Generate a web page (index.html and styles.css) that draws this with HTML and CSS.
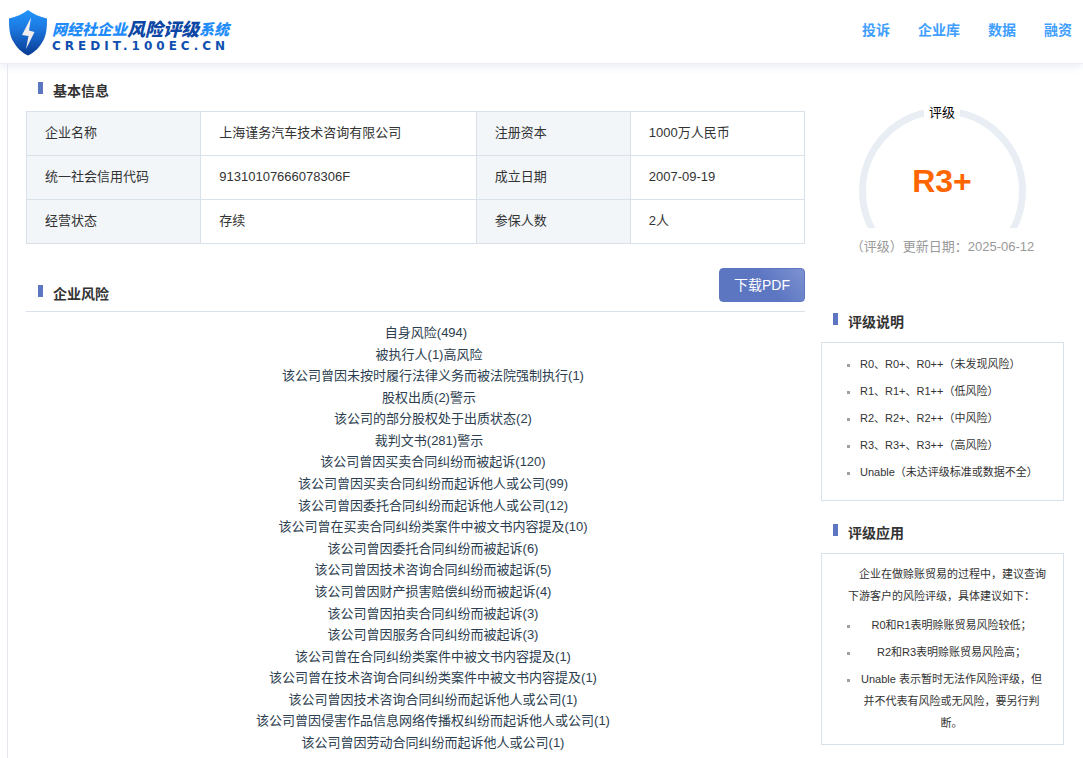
FILE: index.html
```html
<!DOCTYPE html>
<html lang="zh-CN">
<head>
    <meta charset="UTF-8">
    <meta name="viewport" content="width=device-width, initial-scale=1.0">
    <title>网经社企业风险评级系统</title>
    <link rel="stylesheet" href="styles.css">
</head>
<body>
    <header class="header">
        <a class="logo" href="#">
            <svg class="logo-shield" width="40" height="46" viewBox="0 0 40 46" aria-hidden="true">
                <defs>
                    <linearGradient id="shield" x1="0" y1="0" x2="0" y2="1">
                        <stop offset="0" stop-color="#2196fb"/>
                        <stop offset="0.4" stop-color="#1c78e0"/>
                        <stop offset="1" stop-color="#083b92"/>
                    </linearGradient>
                </defs>
                <path d="M20 0C15 4 8 7 1 8.500C1 18 1.500 25 5 31C8.500 37.500 13 42 20 45.500C27 42 31.500 37.500 35 31C38.500 25 39 18 39 8.500C32 7 25 4 20 0Z" fill="url(#shield)"/>
                <path d="M23 7.500L14 25L20.500 26L18 39L26.500 22L21 20.500Z" fill="#f3eeee"/>
            </svg>
            <span class="logo-text">
                <span class="logo-name"><span>网经社企业</span><strong>风险评级</strong><span>系统</span></span>
                <span class="logo-domain">CREDIT.100EC.CN</span>
            </span>
        </a>
        <nav class="nav">
            <a href="#">投诉</a>
            <a href="#">企业库</a>
            <a href="#">数据</a>
            <a href="#">融资</a>
        </nav>
    </header>

    <div class="content">
        <main class="main">
            <h2 class="title">基本信息</h2>
            <table class="info">
                <tr>
                    <th scope="row">企业名称</th>
                    <td class="wide">上海谨务汽车技术咨询有限公司</td>
                    <th scope="row" class="narrow">注册资本</th>
                    <td>1000万人民币</td>
                </tr>
                <tr>
                    <th scope="row">统一社会信用代码</th>
                    <td>91310107666078306F</td>
                    <th scope="row">成立日期</th>
                    <td>2007-09-19</td>
                </tr>
                <tr>
                    <th scope="row">经营状态</th>
                    <td>存续</td>
                    <th scope="row">参保人数</th>
                    <td>2人</td>
                </tr>
            </table>

            <div class="risk-head">
                <h2 class="title">企业风险</h2>
                <button class="download" type="button">下载PDF</button>
            </div>
            <ul class="risk-list">
                <li class="total">自身风险(494)</li>
                <li class="group">被执行人(1)高风险</li>
                <li>该公司曾因未按时履行法律义务而被法院强制执行(1)</li>
                <li class="group">股权出质(2)警示</li>
                <li>该公司的部分股权处于出质状态(2)</li>
                <li class="group">裁判文书(281)警示</li>
                <li>该公司曾因买卖合同纠纷而被起诉(120)</li>
                <li>该公司曾因买卖合同纠纷而起诉他人或公司(99)</li>
                <li>该公司曾因委托合同纠纷而起诉他人或公司(12)</li>
                <li>该公司曾在买卖合同纠纷类案件中被文书内容提及(10)</li>
                <li>该公司曾因委托合同纠纷而被起诉(6)</li>
                <li>该公司曾因技术咨询合同纠纷而被起诉(5)</li>
                <li>该公司曾因财产损害赔偿纠纷而被起诉(4)</li>
                <li>该公司曾因拍卖合同纠纷而被起诉(3)</li>
                <li>该公司曾因服务合同纠纷而被起诉(3)</li>
                <li>该公司曾在合同纠纷类案件中被文书内容提及(1)</li>
                <li>该公司曾在技术咨询合同纠纷类案件中被文书内容提及(1)</li>
                <li>该公司曾因技术咨询合同纠纷而起诉他人或公司(1)</li>
                <li>该公司曾因侵害作品信息网络传播权纠纷而起诉他人或公司(1)</li>
                <li>该公司曾因劳动合同纠纷而起诉他人或公司(1)</li>
            </ul>
        </main>

        <aside class="sidebar">
            <div class="rating">
                <svg class="gauge" width="168" height="128" viewBox="0 0 168 128">
                    <circle cx="83.500" cy="91" r="80" fill="none" stroke="#e9eef5" stroke-width="7"/>
                    <rect x="65" y="0" width="36" height="24" fill="#fff"/>
                    <text class="gauge-label" x="83" y="17" text-anchor="middle">评级</text>
                    <text class="gauge-value" x="83" y="92" text-anchor="middle">R3+</text>
                </svg>
                <p class="rating-date">（评级）更新日期：2025-06-12</p>
            </div>

            <h2 class="title">评级说明</h2>
            <div class="card card-levels">
                <ul>
                    <li>R0、R0+、R0++（未发现风险）</li>
                    <li>R1、R1+、R1++（低风险）</li>
                    <li>R2、R2+、R2++（中风险）</li>
                    <li>R3、R3+、R3++（高风险）</li>
                    <li>Unable（未达评级标准或数据不全）</li>
                </ul>
            </div>

            <h2 class="title">评级应用</h2>
            <div class="card card-usage">
                <p>企业在做赊账贸易的过程中，建议查询下游客户的风险评级，具体建议如下：</p>
                <ul>
                    <li>R0和R1表明赊账贸易风险较低；</li>
                    <li>R2和R3表明赊账贸易风险高；</li>
                    <li>Unable 表示暂时无法作风险评级，但并不代表有风险或无风险，要另行判断。</li>
                </ul>
            </div>
        </aside>
    </div>
</body>
</html>
```
FILE: styles.css
```css
* {
    margin: 0;
    padding: 0;
    box-sizing: border-box;
}

body {
    min-height: 100vh;
    display: flex;
    flex-direction: column;
    background: #fff;
    color: #333;
    font-family: "Liberation Sans", "Noto Sans CJK SC", sans-serif;
    font-size: 13px;
    line-height: 20px;
}

ul {
    list-style: none;
}

a {
    text-decoration: none;
}

/* Header */
.header {
    display: flex;
    align-items: center;
    justify-content: space-between;
    height: 64px;
    padding: 0 11px 0 8px;
    border-bottom: 1px solid #ebeef5;
    box-shadow: 0 2px 8px rgba(90, 110, 180, 0.14);
}

.logo {
    display: flex;
    align-items: center;
    gap: 4px;
    padding-top: 3px;
}

.logo-text {
    display: flex;
    flex-direction: column;
    padding-top: 6px;
}

.logo-name {
    display: flex;
    align-items: center;
    height: 20px;
    color: #1f8cfa;
    font-size: 15px;
    font-style: italic;
    font-weight: 900;
}

.logo-name strong {
    color: #0b47a5;
    font-size: 18px;
    font-weight: 900;
}

.logo-domain {
    color: #0f4fb0;
    font-family: "DejaVu Sans", sans-serif;
    font-size: 12px;
    font-weight: bold;
    line-height: 12px;
    letter-spacing: 4px;
}

.nav {
    display: flex;
    gap: 28px;
    padding-bottom: 4px;
}

.nav a {
    color: #409eff;
    font-size: 14px;
    font-weight: bold;
}

/* Page body */
.content {
    flex: 1;
    display: grid;
    grid-template-columns: 1fr 243px;
    gap: 16px;
    margin-left: 7px;
    padding: 16px 19px 5px 18px;
    border-left: 1px solid #e4e7ed;
}

.main {
    display: flex;
    flex-direction: column;
}

.title {
    display: flex;
    gap: 10px;
    padding-left: 12px;
    margin-bottom: 9px;
    font-size: 14px;
    font-weight: bold;
    line-height: 22px;
}

.title::before {
    content: '';
    width: 5px;
    height: 12px;
    margin-top: 2px;
    background: #5c76c2;
}

.info {
    width: 100%;
    table-layout: fixed;
    border-collapse: collapse;
}

.info th,
.info td {
    height: 44px;
    padding: 0 18px 2px;
    border: 1px solid #d9e1ea;
    font-weight: normal;
    text-align: left;
}

.info th {
    background: #f2f6f9;
}

.info .wide {
    width: 35.4%;
}

.info .narrow {
    width: 19.8%;
}

.risk-head {
    display: flex;
    align-items: flex-start;
    justify-content: space-between;
    margin-top: 24px;
    padding-bottom: 9px;
    border-bottom: 1px solid #d9e1ea;
}

.risk-head .title {
    margin: 15px 0 -3px;
}

.download {
    height: 34px;
    padding: 0 14px 2px;
    border: 1px solid #5c76c2;
    border-radius: 4px;
    background: linear-gradient(50deg, #5c76c2 55%, #7d92d0);
    color: #fff;
    font-family: inherit;
    font-size: 14px;
}

.risk-list {
    flex: 1;
    display: flex;
    flex-direction: column;
    justify-content: space-between;
    padding-top: 11px;
    color: #2c3e50;
    text-align: center;
}

.risk-list li {
    padding-left: 35px;
}

.risk-list .group {
    padding-left: 27px;
}

.risk-list .total {
    padding-left: 21px;
}

/* Sidebar */
.rating {
    display: flex;
    flex-direction: column;
    align-items: center;
    gap: 9px;
    padding: 20px 0 54px;
}

.gauge-label {
    fill: #000;
    font-size: 13px;
}

.gauge-value {
    fill: #ff6600;
    font-size: 32px;
    font-weight: bold;
}

.rating-date {
    color: #999;
}

.card {
    border: 1px solid #d9e1ea;
    font-size: 11px;
    line-height: 22px;
}

.card ul {
    padding: 0 20px 0 38px;
    list-style: square;
}

.card li + li {
    margin-top: 5px;
}

.card li::marker {
    color: #a0a0a0;
}

.card-levels {
    margin-bottom: 21px;
    padding: 10px 0 17px;
}

.card-usage {
    padding: 9px 0 10px;
    text-align: center;
}

.card-usage p {
    margin-bottom: 7px;
    padding: 0 16px 0 14px;
    text-indent: 2em;
}

@media (max-width: 768px) {
    .content {
        grid-template-columns: 1fr;
    }

    .header {
        height: auto;
        flex-wrap: wrap;
    }
}
```
